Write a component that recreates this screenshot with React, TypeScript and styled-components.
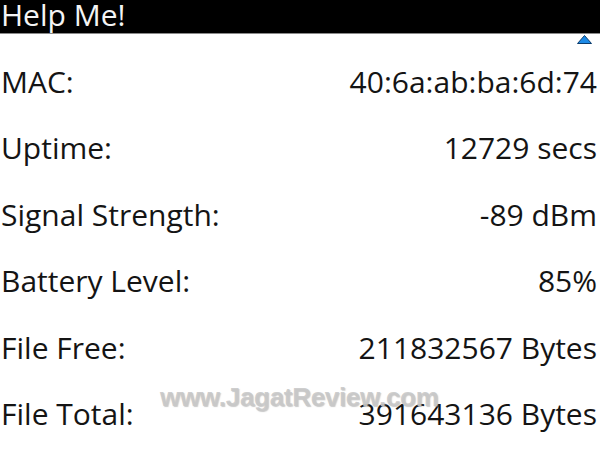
import React from "react";
import styled, { createGlobalStyle } from "styled-components";

const Global = createGlobalStyle`
  html, body { margin: 0; padding: 0; background: #fff; }
  body { width: 600px; height: 450px; overflow: hidden; }
`;

const Screen = styled.div`
  position: relative;
  width: 600px;
  height: 450px;
  background: #fff;
  font-family: "Open Sans", "Noto Sans", sans-serif;
  overflow: hidden;
`;

const TitleBar = styled.div`
  height: 33px;
  background: #000;
  border-bottom: 1px solid #8a8a8a;
  display: flex;
  align-items: flex-start;
  padding-left: 1px;
`;

const Title = styled.h1`
  margin: 0;
  color: #f4f4f4;
  font-family: "Open Sans", "Noto Sans", sans-serif;
  font-weight: 400;
  font-size: 30px;
  line-height: 30px;
`;

const List = styled.div`
  display: flex;
  flex-direction: column;
  padding: 15px 3px 0 1px;
`;

const Row = styled.div`
  display: flex;
  justify-content: space-between;
  align-items: baseline;
  height: 66.4px;
  line-height: 66px;
  font-size: 30px;
  color: #141414;
`;

const Label = styled.span``;
const Value = styled.span``;

const ScrollUp = styled.svg`
  position: absolute;
  left: 577px;
  top: 35px;
`;

const Watermark = styled.div`
  position: absolute;
  left: 160px;
  top: 382px;
  font-family: "Liberation Sans", Arial, sans-serif;
  font-weight: 700;
  font-size: 26px;
  letter-spacing: -0.3px;
  color: rgba(200, 200, 200, 0.9);
  text-shadow: 1px 1px 1px rgba(150,150,150,0.5);
  pointer-events: none;
`;

const rows: [string, string][] = [
  ["MAC:", "40:6a:ab:ba:6d:74"],
  ["Uptime:", "12729 secs"],
  ["Signal Strength:", "-89 dBm"],
  ["Battery Level:", "85%"],
  ["File Free:", "211832567 Bytes"],
  ["File Total:", "391643136 Bytes"],
];

export default function App() {
  return (
    <Screen>
      <Global />
      <TitleBar>
        <Title>Help Me!</Title>
      </TitleBar>
      <ScrollUp width="15" height="9" viewBox="0 0 15 9">
        <polygon points="7.5,0.5 14.5,8.5 0.5,8.5" fill="#1d8ae6" stroke="#0b3d6e" strokeWidth="1" />
      </ScrollUp>
      <List>
        {rows.map(([l, v]) => (
          <Row key={l}>
            <Label>{l}</Label>
            <Value>{v}</Value>
          </Row>
        ))}
      </List>
      <Watermark>www.JagatReview.com</Watermark>
    </Screen>
  );
}
